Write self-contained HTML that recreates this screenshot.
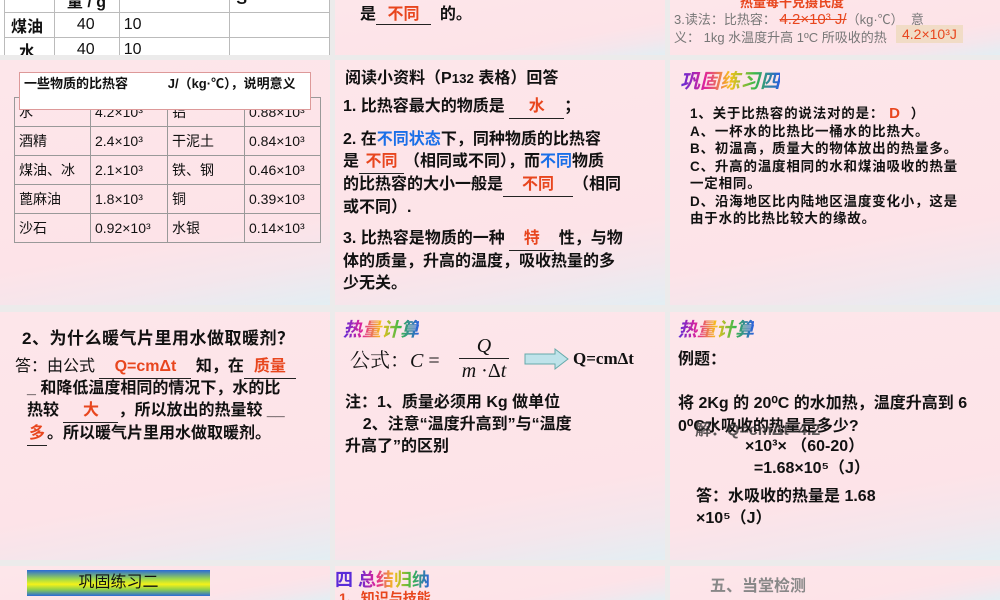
<!DOCTYPE html>
<html><head><meta charset="utf-8"><style>
*{margin:0;padding:0;box-sizing:border-box}
body{width:1000px;height:600px;background:#ecebeb;position:relative;overflow:hidden;font-family:"Liberation Sans","Noto Sans CJK SC",sans-serif;color:#111}
.s{position:absolute;background:linear-gradient(170deg,#fde6ea 0%,#fde3e8 70%,#f4e6ec 85%,#e3eef3 100%);overflow:hidden}
.a{position:absolute;white-space:nowrap}
.r{color:#e8461e}
.b{color:#1a6fe8}
.u{display:inline-block;border-bottom:1px solid #222;text-align:center}
table{border-collapse:collapse}
.rb{background:linear-gradient(90deg,#5a2bd8,#e0239a,#f6c21a,#3ab84a,#2b5fe0);-webkit-background-clip:text;color:transparent;font-weight:bold;font-style:italic}
</style></head><body>
<!-- row0 -->
<div class="s" style="left:0;top:0;width:330px;height:55px;background:#fff">
<table style="position:absolute;left:4px;top:-14px;font-size:16px;font-weight:bold">
<tr style="height:26px"><td style="width:50px;border:1px solid #bbb"></td><td style="width:65px;border:1px solid #bbb;padding-left:12px">量 / g</td><td style="width:111px;border:1px solid #bbb"></td><td style="width:100px;border:1px solid #bbb;padding-left:6px">S</td></tr>
<tr style="height:25px"><td style="border:1px solid #bbb;padding-left:6px">煤油</td><td style="border:1px solid #bbb;padding-left:22px;font-weight:normal">40</td><td style="border:1px solid #bbb;padding-left:4px;font-weight:normal">10</td><td style="border:1px solid #bbb"></td></tr>
<tr style="height:25px"><td style="border:1px solid #bbb;padding-left:14px">水</td><td style="border:1px solid #bbb;padding-left:22px;font-weight:normal">40</td><td style="border:1px solid #bbb;padding-left:4px;font-weight:normal">10</td><td style="border:1px solid #bbb"></td></tr>
</table></div>
<div class="s" style="left:335px;top:0;width:330px;height:55px">
<div class="a" style="left:25px;top:0;font-size:16px;font-weight:bold">是<span class="u r" style="width:55px">不同</span>&nbsp; 的。</div></div>
<div class="s" style="left:670px;top:0;width:330px;height:55px">
<div class="a r" style="left:70px;top:-8px;font-size:13px;font-weight:bold">热量每千克摄氏度</div>
<div class="a" style="left:4px;top:9px;font-size:13px;color:#777">3.读法：比热容： <span class="r" style="text-decoration:line-through;font-size:15px">4.2×10³ J/</span>（kg·℃）&nbsp; 意</div>
<div class="a" style="left:4px;top:27px;font-size:13px;color:#777">义： 1kg 水温度升高 1ºC 所吸收的热</div>
<div class="a r" style="left:226px;top:25px;font-size:14px;background:#f1dcc6;padding:1px 6px">4.2×10³J</div></div>
<!-- row1 -->
<div class="s" style="left:0;top:60px;width:330px;height:245px">
<table style="position:absolute;left:14px;top:37px;font-size:14px;border:1px solid #888">
<tr style="height:29px"><td style="width:76px;border:1px solid #999;padding-left:4px">水</td><td style="width:77px;border:1px solid #999;padding-left:4px">4.2×10³</td><td style="width:77px;border:1px solid #999;padding-left:4px">铝</td><td style="width:76px;border:1px solid #999;padding-left:4px">0.88×10³</td></tr>
<tr style="height:29px"><td style="border:1px solid #999;padding-left:4px">酒精</td><td style="border:1px solid #999;padding-left:4px">2.4×10³</td><td style="border:1px solid #999;padding-left:4px">干泥土</td><td style="border:1px solid #999;padding-left:4px">0.84×10³</td></tr>
<tr style="height:29px"><td style="border:1px solid #999;padding-left:4px">煤油、冰</td><td style="border:1px solid #999;padding-left:4px">2.1×10³</td><td style="border:1px solid #999;padding-left:4px">铁、钢</td><td style="border:1px solid #999;padding-left:4px">0.46×10³</td></tr>
<tr style="height:29px"><td style="border:1px solid #999;padding-left:4px">蓖麻油</td><td style="border:1px solid #999;padding-left:4px">1.8×10³</td><td style="border:1px solid #999;padding-left:4px">铜</td><td style="border:1px solid #999;padding-left:4px">0.39×10³</td></tr>
<tr style="height:29px"><td style="border:1px solid #999;padding-left:4px">沙石</td><td style="border:1px solid #999;padding-left:4px">0.92×10³</td><td style="border:1px solid #999;padding-left:4px">水银</td><td style="border:1px solid #999;padding-left:4px">0.14×10³</td></tr>
</table>
<div class="a" style="left:19px;top:12px;width:292px;height:38px;background:#fff;border:1px solid #d99;font-size:13px;font-weight:bold;padding:2px 4px;line-height:17px;white-space:normal">一些物质的比热容 &nbsp; &nbsp; &nbsp; &nbsp; &nbsp; J/（kg·℃），说明意义</div></div>
<div class="s" style="left:335px;top:60px;width:330px;height:245px;font-size:16px;font-weight:bold;line-height:22px">
<div class="a" style="left:10px;top:8px">阅读小资料（P<small>132</small> 表格）回答</div>
<div class="a" style="left:8px;top:36px">1. 比热容最大的物质是 <span class="u r" style="width:55px">水</span>；</div>
<div class="a" style="left:8px;top:69px;line-height:22px">2. 在<span class="b">不同状态</span>下，同种物质的比热容<br>是<span class="u r" style="width:45px">不同</span>（相同或不同），而<span class="b">不同</span>物质<br>的比热容的大小一般是<span class="u r" style="width:70px">不同</span>（相同<br>或不同）.</div>
<div class="a" style="left:8px;top:168px;line-height:22px">3. 比热容是物质的一种 <span class="u r" style="width:45px">特</span> 性，与物<br>体的质量，升高的温度，吸收热量的多<br>少无关。</div></div>
<div class="s" style="left:670px;top:60px;width:330px;height:245px">
<div class="a rb" style="left:10px;top:5px;font-size:20px">巩固练习四</div>
<div class="a" style="left:20px;top:45px;font-size:13.5px;font-weight:bold;line-height:17.5px;letter-spacing:.8px">1、关于比热容的说法对的是：<span class="r" style="font-size:15px">&nbsp;D&nbsp;&nbsp;</span>）<br>A、一杯水的比热比一桶水的比热大。<br>B、初温高，质量大的物体放出的热量多。<br>C、升高的温度相同的水和煤油吸收的热量<br>一定相同。<br>D、沿海地区比内陆地区温度变化小，这是<br>由于水的比热比较大的缘故。</div></div>
<!-- row2 -->
<div class="s" style="left:0;top:312px;width:330px;height:248px;font-size:16px;font-weight:bold">
<div class="a" style="left:22px;top:12px;font-size:17px;letter-spacing:.5px">2、为什么暖气片里用水做取暖剂？</div>
<div class="a" style="left:15px;top:44px;line-height:22px;font-weight:normal"><span>答：由公式 </span><span class="u r" style="width:92px;font-weight:bold">Q=cmΔt</span><b> 知，在</b><span class="u r" style="width:52px;font-weight:bold">质量</span></div>
<div class="a" style="left:27px;top:66px;line-height:22px">_ 和降低温度相同的情况下，水的比<br>热较 <span class="u r" style="width:55px">大</span>，所以放出的热量较 __<br><span class="u r" style="width:20px">多</span>。所以暖气片里用水做取暖剂。</div></div>
<div class="s" style="left:335px;top:312px;width:330px;height:248px;font-size:16px;font-weight:bold">
<div class="a rb" style="left:8px;top:3px;font-size:19px">热量计算</div>
<div class="a" style="left:15px;top:32px;font-family:'Liberation Serif','Noto Serif CJK SC',serif;font-weight:normal;font-size:20px">公式：<i>C</i> =</div>
<div class="a" style="left:124px;top:22px;font-family:'Liberation Serif',serif;font-weight:normal;font-size:20px;text-align:center;width:50px;line-height:24px"><i>Q</i><div style="border-top:1px solid #222"></div><i>m</i> ·Δ<i>t</i></div>
<svg class="a" style="left:189px;top:36px" width="46" height="22"><path d="M1 6H31V1L44 11L31 21V16H1Z" fill="#bfe3ea" stroke="#6aa"/></svg>
<div class="a" style="left:238px;top:37px;font-family:'Liberation Serif',serif;font-size:17px">Q=cmΔt</div>
<div class="a" style="left:10px;top:80px;line-height:22px">注：1、质量必须用 Kg 做单位<br>&nbsp; &nbsp; 2、注意“温度升高到”与“温度<br>升高了”的区别</div></div>
<div class="s" style="left:670px;top:312px;width:330px;height:248px;font-size:16px;font-weight:bold">
<div class="a rb" style="left:8px;top:3px;font-size:19px">热量计算</div>
<div class="a" style="left:8px;top:33px">例题：</div>
<div class="a" style="left:8px;top:77px">将 2Kg 的 20⁰C 的水加热，温度升高到 6</div>
<div class="a" style="left:8px;top:100px">0⁰C水吸收的热量是多少?</div>
<div class="a" style="left:25px;top:104px;color:#333;opacity:.8">解：Q=cmΔt=4.2</div>
<div class="a" style="left:75px;top:124px;line-height:22px">×10³× （60-20）<br>&nbsp; =1.68×10⁵（J）</div>
<div class="a" style="left:26px;top:174px;line-height:22px">答：水吸收的热量是 1.68<br>×10⁵（J）</div></div>
<!-- row3 -->
<div class="s" style="left:0;top:566px;width:330px;height:34px">
<div class="a" style="left:27px;top:4px;width:183px;height:26px;background:linear-gradient(#2a6ad8,#9fd94a 35%,#f4f21a 55%,#8fd04a 75%,#2a6ad8);text-align:center;font-size:16px;line-height:26px">巩固练习二</div></div>
<div class="s" style="left:335px;top:566px;width:330px;height:34px">
<div class="a" style="left:0;top:0;font-size:18px;font-weight:bold"><span style="color:#5a2bd8">四</span> <span class="rb" style="font-style:normal">总结归纳</span></div>
<div class="a r" style="left:4px;top:22px;font-size:14px;font-weight:bold">1、知识与技能</div></div>
<div class="s" style="left:670px;top:566px;width:330px;height:34px">
<div class="a" style="left:40px;top:6px;font-size:16px;font-weight:bold;color:#888">五、当堂检测</div></div>
</body></html>
